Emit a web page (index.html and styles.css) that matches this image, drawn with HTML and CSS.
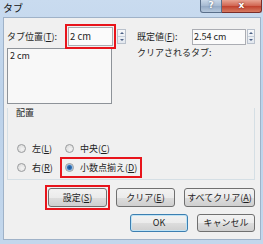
FILE: index.html
```html
<!DOCTYPE html>
<html>
<head>
<meta charset="utf-8">
<link rel="stylesheet" href="styles.css">
</head>
<body>
    <div class="window">
        <div class="titlebar">
            <span class="title">タブ</span>
            <div class="capButtons">
                <span class="cap help">?</span>
                <span class="cap close">x</span>
            </div>
        </div>
        <div class="client">
            <div class="top">
                <div class="colLeft">
                    <div class="fieldRow">
                        <span class="label lblPos">タブ位置(<u>T</u>):</span>
                        <span class="textbox tbPos marked">2 cm</span>
                        <span class="spin"><i class="up"></i><i class="down"></i></span>
                    </div>
                    <div class="listbox">2 cm</div>
                </div>
                <div class="colRight">
                    <div class="fieldRow">
                        <span class="label lblDef">既定値(<u>F</u>):</span>
                        <span class="textbox tbDef">2.54 cm</span>
                        <span class="spin"><i class="up"></i><i class="down"></i></span>
                    </div>
                    <div class="label clearLabel">クリアされるタブ:</div>
                </div>
            </div>
            <div class="group">
                <div class="groupTitle">配置</div>
                <div class="radios">
                    <span class="radio"><span class="dot"></span>左(<u>L</u>)</span>
                    <span class="radio"><span class="dot"></span>中央(<u>C</u>)</span>
                    <span class="radio"><span class="dot"></span>右(<u>R</u>)</span>
                    <span class="radio marked"><span class="dot on"></span>小数点揃え(<u>D</u>)</span>
                </div>
            </div>
            <div class="btnRow">
                <span class="markWrap"><span class="btn w59">設定(<u>S</u>)</span></span>
                <span class="btn w59">クリア(<u>E</u>)</span>
                <span class="btn w71">すべてクリア(<u>A</u>)</span>
            </div>
            <div class="btnRow second">
                <span class="btn w58 default">OK</span>
                <span class="btn w58">キャンセル</span>
            </div>
        </div>
    </div>
</body>
</html>
```

FILE: styles.css
```css
html, body {
    margin: 0px;
    padding: 0px;
}

body {
    font-family: "Noto Sans CJK JP", "Noto Sans", sans-serif;
    font-size: 9px;
    color: #1e1e1e;
    background: #ffffff;
}

u {
    text-decoration: underline;
    text-underline-offset: 1px;
}

.window {
    width: 263px;
    height: 244px;
    box-sizing: border-box;
    padding: 0px 3px 5px 4px;
    background: linear-gradient(to bottom, #c9dbef, #bcd2ea 40%, #c3d7ec);
}

.titlebar {
    height: 18px;
    display: flex;
    justify-content: space-between;
    align-items: flex-start;
}

.title {
    font-size: 10px;
    line-height: 16px;
    margin-left: -1px;
    color: #111111;
}

.capButtons {
    display: flex;
    margin-right: -2px;
}

.cap {
    height: 13px;
    line-height: 11px;
    text-align: center;
    color: #ffffff;
    font-family: "DejaVu Sans", sans-serif;
    font-weight: bold;
    border: 1px solid #5a6f8a;
    border-top: none;
    box-sizing: border-box;
}

.help {
    width: 22px;
    font-size: 9px;
    border-radius: 0px 0px 0px 3px;
    background: linear-gradient(to bottom, #c8d7e8, #a5b9d1 50%, #93a9c4 51%, #b7c9dd);
    text-shadow: 0px 0px 2px #44546b;
}

.close {
    width: 40px;
    font-size: 9px;
    border-color: #7a2e2a;
    border-left: none;
    border-radius: 0px 0px 3px 0px;
    background: linear-gradient(to bottom, #e8a493, #d0634f 50%, #c0402c 51%, #d77b62);
    text-shadow: 0px 0px 2px #5a1a10;
}

.client {
    height: 221px;
    box-sizing: border-box;
    padding: 9px 5px 0px 3px;
    background: #f0f0f0;
    outline: 1px solid #9fb2c8;
}

.top {
    display: flex;
}

.colLeft {
    width: 121px;
}

.colRight {
    margin-left: 10px;
}

.fieldRow {
    display: flex;
    align-items: center;
    height: 19px;
}

.label {
    line-height: 10px;
    white-space: nowrap;
}

.lblPos {
    width: 61px;
}

.lblDef {
    width: 55px;
}

.textbox {
    box-sizing: border-box;
    border: 1px solid #abadb3;
    background: #fbfbfb;
    padding-left: 1px;
    line-height: 14px;
}

.tbPos {
    width: 45px;
    height: 19px;
    line-height: 17px;
    font-size: 9.5px;
}

.tbDef {
    width: 54px;
    height: 16px;
}

.marked {
    outline: 2px solid #e8141b;
    outline-offset: 1px;
}

.spin {
    display: flex;
    flex-direction: column;
    width: 9px;
    height: 15px;
    margin-left: 4px;
    box-sizing: border-box;
    border: 1px solid #b9c1cc;
    background: linear-gradient(to bottom, #f6f8fa, #e3e8ef);
}

.colRight .spin {
    margin-left: 1px;
    width: 8px;
}

.spin i {
    flex: 1;
    position: relative;
}

.spin .up {
    border-bottom: 1px solid #c8d0da;
}

.spin i::after {
    content: "";
    position: absolute;
    left: 50%;
    top: 50%;
    margin-left: -2px;
    border-left: 2px solid transparent;
    border-right: 2px solid transparent;
}

.spin .up::after {
    margin-top: -1px;
    border-bottom: 2px solid #4d6185;
}

.spin .down::after {
    margin-top: -1px;
    border-top: 2px solid #4d6185;
}

.listbox {
    width: 105px;
    height: 56px;
    margin-top: 2px;
    box-sizing: border-box;
    border: 1px solid #8e9399;
    background: #f8f8f8;
    padding: 2px 0px 0px 2px;
    line-height: 10px;
}

.clearLabel {
    margin-top: 2px;
}

.group {
    margin-top: 4px;
    border: 1px solid #d5dfe5;
    border-top: none;
    padding: 0px 0px 4px 9px;
}

.groupTitle {
    line-height: 10px;
    margin-left: -1px;
}

.radios {
    display: grid;
    grid-template-columns: 46px auto;
    grid-auto-rows: 15px;
    row-gap: 4px;
    margin-top: 23px;
    justify-items: start;
}

.radio {
    display: flex;
    align-items: center;
    height: 15px;
    white-space: nowrap;
}

.radios .radio:nth-child(2n) {
    padding: 0px 2px;
}

.dot {
    width: 9px;
    height: 9px;
    box-sizing: border-box;
    border-radius: 50%;
    border: 1px solid #9a9c9e;
    background: radial-gradient(circle at 60% 60%, #f4f4f4, #d6d6d6);
    margin-right: 6px;
}

.dot.on {
    background: radial-gradient(circle, #1b4f8c 0px, #2f72b8 2px, #9fc1e3 3px, #eef2f6 4px);
}

.btnRow {
    display: flex;
    justify-content: flex-end;
    gap: 9px;
    margin-top: 8px;
}

.btnRow.second {
    margin-top: 7px;
}

.markWrap {
    display: flex;
    margin: -3px;
    padding: 1px;
    border: 2px solid #e8141b;
}

.btn {
    height: 19px;
    box-sizing: border-box;
    border: 1px solid #707070;
    border-radius: 3px;
    background: linear-gradient(to bottom, #f2f2f2, #ebebeb 50%, #dddddd 51%, #cfcfcf);
    text-align: center;
    line-height: 17px;
    white-space: nowrap;
}

.second .btn {
    height: 18px;
    line-height: 16px;
}

.w58 {
    width: 58px;
}

.w59 {
    width: 59px;
}

.w71 {
    width: 71px;
}

.default {
    border-color: #3c7fb1;
    box-shadow: inset 0px 0px 0px 1px #bfe3f5;
}
```
